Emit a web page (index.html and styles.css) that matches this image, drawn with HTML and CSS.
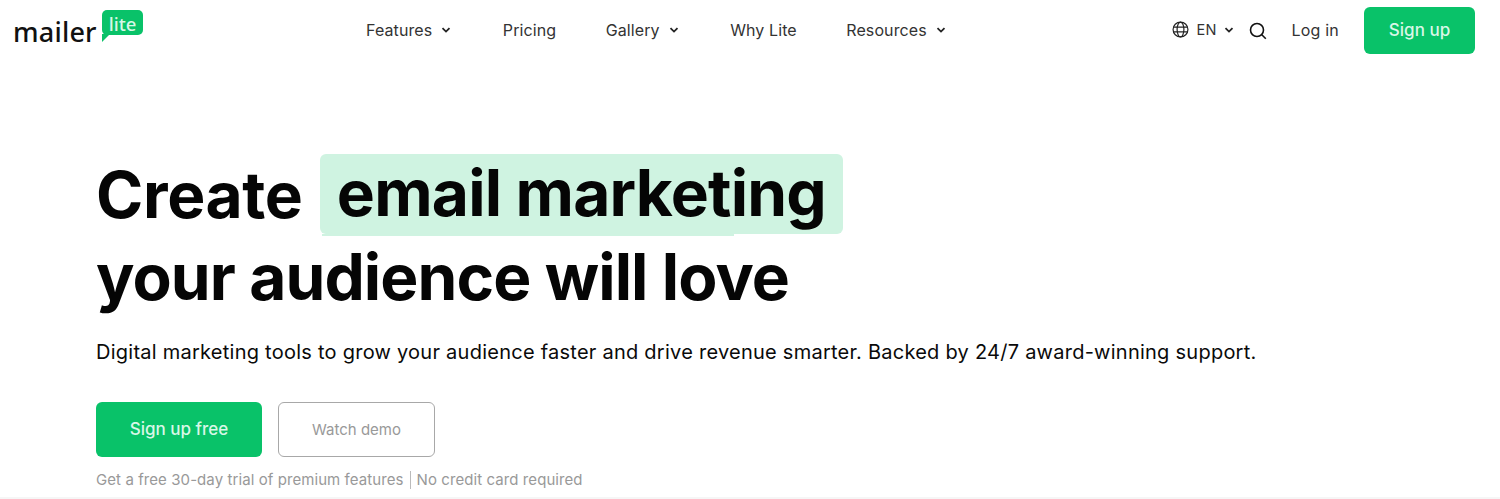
FILE: index.html
```html
<!DOCTYPE html>
<html lang="en">
<head>
	<meta charset="UTF-8">
	<title>MailerLite</title>
	<link rel="stylesheet" href="styles.css">
</head>
<body>
	<header class="header">
		<a class="logo" href="#">
			<span class="logo-word">mailer</span>
			<span class="logo-badge">lite</span>
		</a>
		<nav class="nav">
			<a class="nav-link" href="#">Features<svg class="chev" viewBox="0 0 10 6"><path d="M1.5 1.2 5 4.6l3.5-3.4"/></svg></a>
			<a class="nav-link" href="#">Pricing</a>
			<a class="nav-link" href="#">Gallery<svg class="chev" viewBox="0 0 10 6"><path d="M1.5 1.2 5 4.6l3.5-3.4"/></svg></a>
			<a class="nav-link" href="#">Why Lite</a>
			<a class="nav-link" href="#">Resources<svg class="chev" viewBox="0 0 10 6"><path d="M1.5 1.2 5 4.6l3.5-3.4"/></svg></a>
		</nav>
		<div class="tools">
			<a class="lang" href="#">
				<svg class="globe" viewBox="0 0 16 16"><circle cx="8" cy="8" r="7"/><ellipse cx="8" cy="8" rx="3.2" ry="7"/><path d="M1.3 5.7h13.4M1.3 10.3h13.4"/></svg>
				EN
				<svg class="chev" viewBox="0 0 10 6"><path d="M1.5 1.2 5 4.6l3.5-3.4"/></svg>
			</a>
			<svg class="search" viewBox="0 0 18 18"><circle cx="8" cy="8" r="6.5"/><path d="m12.8 12.8 4 4"/></svg>
			<a class="login" href="#">Log in</a>
			<a class="btn btn-small" href="#">Sign up</a>
		</div>
	</header>
	<main class="hero">
		<h1 class="title">
			<span class="title-line"><span class="word">Create</span> <span class="mark">email marketing</span></span>
			<span class="title-line">your audience will love</span>
		</h1>
		<p class="lead">Digital marketing tools to grow your audience faster and drive revenue smarter. Backed by 24/7 award-winning support.</p>
		<div class="actions">
			<a class="btn btn-free" href="#">Sign up free</a>
			<a class="btn-demo" href="#">Watch demo</a>
		</div>
		<p class="note">Get a free 30-day trial of premium features<span class="sep"></span>No credit card required</p>
	</main>
</body>
</html>
```

FILE: styles.css
```css
* {
	box-sizing: border-box;
}
html, body {
	height: 100%;
}
body {
	margin: 0;
	background: #fff;
	color: #0a0a0a;
	font-family: Inter, "Liberation Sans", sans-serif;
	overflow: hidden;
	border-bottom: 2px solid #f6f6f6;
}
a {
	color: inherit;
	text-decoration: none;
}
.header {
	display: flex;
	align-items: center;
	height: 61px;
	padding: 0 25px 0 14px;
}
.logo {
	position: relative;
	display: block;
	width: 130px;
	height: 44px;
	margin-top: 1px;
}
.logo-word {
	position: absolute;
	left: -1px;
	top: 8px;
	font-family: "Noto Sans", sans-serif;
	font-size: 27px;
	line-height: 30px;
	font-weight: 500;
	letter-spacing: 0.2px;
	color: #111;
}
.logo-badge {
	position: absolute;
	left: 88px;
	top: 1px;
	width: 41px;
	height: 25px;
	background: #09c269;
	border-radius: 5px;
	color: #d8f7e6;
	font-family: "Noto Sans", sans-serif;
	font-size: 18.5px;
	line-height: 28px;
	font-weight: 500;
	text-align: center;
}
.logo-badge::after {
	content: "";
	position: absolute;
	left: 0;
	top: 24px;
	border-top: 8px solid #09c269;
	border-right: 8px solid transparent;
}
.nav {
	display: flex;
	gap: 49.5px;
	margin-left: 222px;
	padding-bottom: 2px;
	font-size: 16px;
	letter-spacing: 0.1px;
	color: #333;
}
.nav-link {
	display: flex;
	align-items: center;
	gap: 9px;
}
.chev {
	width: 10px;
	height: 6px;
	margin-right: 2px;
	fill: none;
	stroke: #222;
	stroke-width: 1.8;
}
.tools {
	display: flex;
	align-items: center;
	margin-left: auto;
	color: #333;
	font-size: 16px;
	letter-spacing: 0.2px;
}
.lang {
	display: flex;
	align-items: center;
	gap: 7px;
	font-size: 14.5px;
	padding-bottom: 2px;
}
.globe {
	width: 17px;
	height: 17px;
	fill: none;
	stroke: #222;
	stroke-width: 1.1;
}
.search {
	width: 18px;
	height: 18px;
	margin-left: 13px;
	fill: none;
	stroke: #111;
	stroke-width: 1.6;
}
.login {
	margin-left: 25px;
	padding-bottom: 2px;
}
.btn {
	display: flex;
	align-items: center;
	justify-content: center;
	background: #09c269;
	color: #d9f7e7;
	border-radius: 6px;
	letter-spacing: 0;
}
.btn-small {
	width: 111px;
	height: 47px;
	margin-left: 25px;
	padding-bottom: 2px;
	font-size: 17px;
	font-weight: 500;
}
.hero {
	padding: 93px 0 0 96px;
}
.title {
	margin: 0;
	font-size: 64px;
	line-height: 82px;
	font-weight: 700;
	letter-spacing: -0.9px;
	color: #050505;
}
.title-line {
	display: block;
	white-space: nowrap;
}
.word {
	letter-spacing: -0.35px;
}
.mark {
	display: inline-block;
	position: relative;
	margin-left: 3px;
	padding: 0 17px;
	height: 80px;
	line-height: 78px;
	letter-spacing: -0.8px;
	background: #cff3e1;
	border-radius: 6px;
	vertical-align: top;
}
.mark::after {
	content: "";
	position: absolute;
	left: 2px;
	top: 80px;
	width: 412px;
	height: 2px;
	background: #cff3e1;
}
.lead {
	margin: 20px 0 0;
	font-size: 20px;
	line-height: 28px;
	letter-spacing: 0.25px;
	white-space: nowrap;
}
.actions {
	display: flex;
	gap: 16px;
	margin-top: 36px;
}
.btn-free {
	width: 166px;
	height: 55px;
	padding-bottom: 2px;
	font-size: 17px;
	font-weight: 500;
}
.btn-demo {
	display: flex;
	align-items: center;
	justify-content: center;
	width: 157px;
	height: 55px;
	border: 1px solid #a8a8a8;
	border-radius: 6px;
	color: #999;
	font-size: 15px;
}
.note {
	display: flex;
	align-items: center;
	margin: 12px 0 0;
	color: #999;
	font-size: 15px;
	line-height: 22px;
	letter-spacing: 0.08px;
	white-space: pre;
}
.sep {
	width: 1px;
	height: 18px;
	margin: 0 6px;
	background: #bbb;
}
```
